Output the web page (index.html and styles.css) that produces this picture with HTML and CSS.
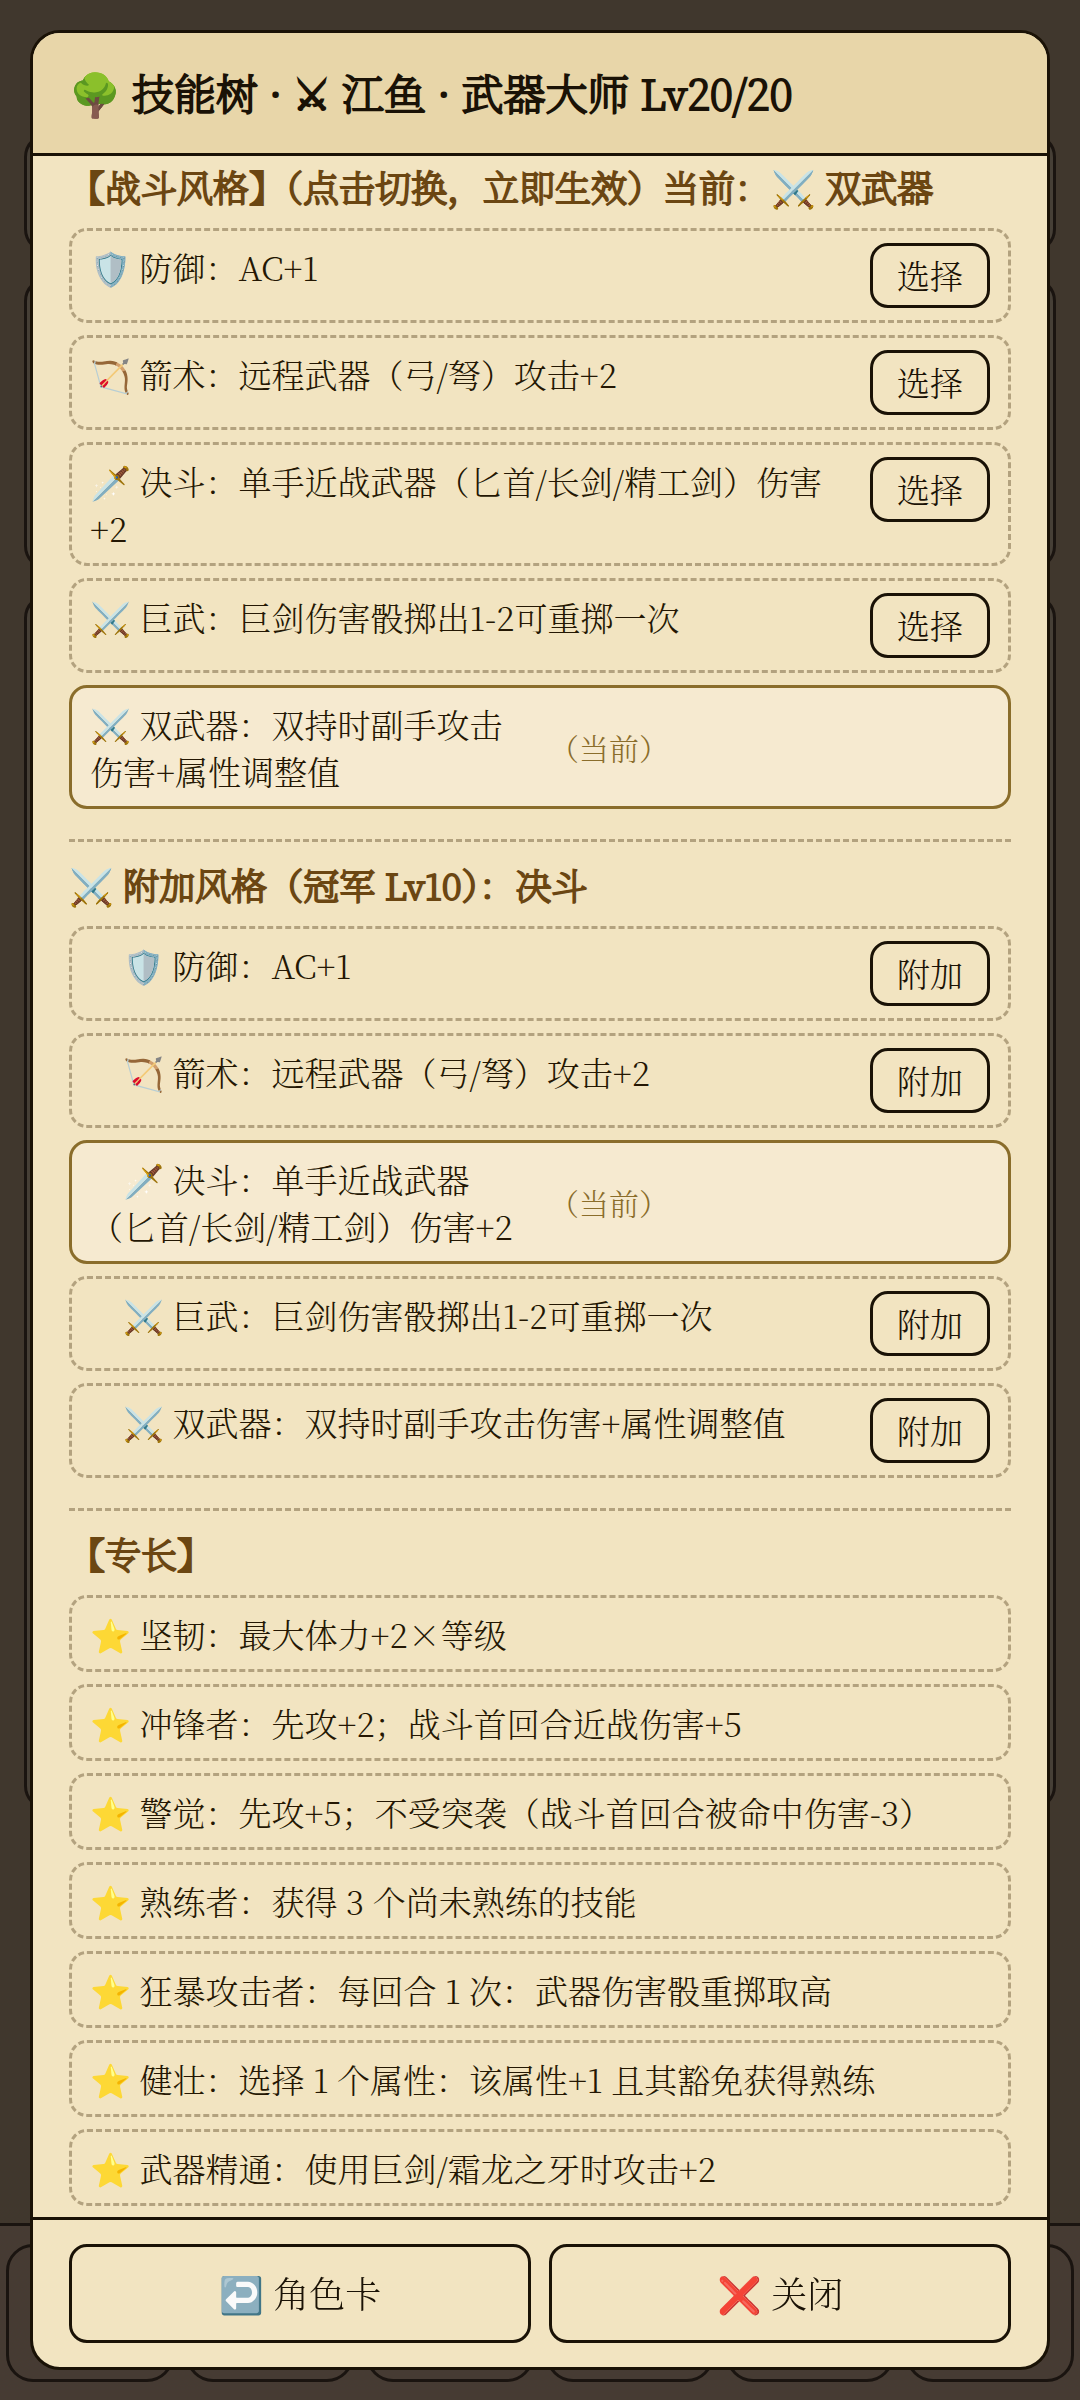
FILE: index.html
```html
<!DOCTYPE html>
<html lang="zh-CN">
<head>
<meta charset="utf-8">
<meta name="viewport" content="width=device-width, initial-scale=1">
<title>技能树</title>
<link rel="stylesheet" href="styles.css">
</head>
<body>
<div class="game" aria-hidden="true">
  <div class="panels">
    <div class="panel panel-status"></div>
    <div class="panel panel-scene"></div>
    <div class="panel panel-log"></div>
  </div>
  <div class="tabs">
    <div class="tab"></div><div class="tab"></div><div class="tab"></div>
    <div class="tab"></div><div class="tab"></div><div class="tab"></div>
  </div>
</div>
<div class="overlay">
  <main class="dialog" role="dialog" aria-labelledby="dialog-title">
    <header class="dialog-head">
      <h1 id="dialog-title">🌳 技能树 · ⚔︎ 江鱼 · 武器大师 Lv20/20</h1>
    </header>
    <div class="dialog-body">
      <section class="group">
        <h2>【战斗风格】（点击切换，立即生效）当前：⚔️ 双武器</h2>
        <ul class="rows">
          <li class="row"><span class="label">🛡️ 防御：AC+1</span><button type="button" class="pick">选择</button></li>
          <li class="row"><span class="label">🏹 箭术：远程武器（弓/弩）攻击+2</span><button type="button" class="pick">选择</button></li>
          <li class="row"><span class="label">🗡️ 决斗：单手近战武器（匕首/长剑/精工剑）伤害+2</span><button type="button" class="pick">选择</button></li>
          <li class="row"><span class="label">⚔️ 巨武：巨剑伤害骰掷出1-2可重掷一次</span><button type="button" class="pick">选择</button></li>
          <li class="row current"><span class="label">⚔️ 双武器：双持时副手攻击伤害+属性调整值</span><span class="mark">（当前）</span></li>
        </ul>
      </section>
      <section class="group">
        <h2>⚔️ 附加风格（冠军 Lv10）：决斗</h2>
        <ul class="rows">
          <li class="row"><span class="label">　🛡️ 防御：AC+1</span><button type="button" class="pick">附加</button></li>
          <li class="row"><span class="label">　🏹 箭术：远程武器（弓/弩）攻击+2</span><button type="button" class="pick">附加</button></li>
          <li class="row current"><span class="label">　🗡️ 决斗：单手近战武器（匕首/长剑/精工剑）伤害+2</span><span class="mark">（当前）</span></li>
          <li class="row"><span class="label">　⚔️ 巨武：巨剑伤害骰掷出1-2可重掷一次</span><button type="button" class="pick">附加</button></li>
          <li class="row"><span class="label">　⚔️ 双武器：双持时副手攻击伤害+属性调整值</span><button type="button" class="pick">附加</button></li>
        </ul>
      </section>
      <section class="group">
        <h2>【专长】</h2>
        <ul class="rows">
          <li class="row"><span class="label">⭐ 坚韧：最大体力+2×等级</span></li>
          <li class="row"><span class="label">⭐ 冲锋者：先攻+2；战斗首回合近战伤害+5</span></li>
          <li class="row"><span class="label">⭐ 警觉：先攻+5；不受突袭（战斗首回合被命中伤害-3）</span></li>
          <li class="row"><span class="label">⭐ 熟练者：获得 3 个尚未熟练的技能</span></li>
          <li class="row"><span class="label">⭐ 狂暴攻击者：每回合 1 次：武器伤害骰重掷取高</span></li>
          <li class="row"><span class="label">⭐ 健壮：选择 1 个属性：该属性+1 且其豁免获得熟练</span></li>
          <li class="row"><span class="label">⭐ 武器精通：使用巨剑/霜龙之牙时攻击+2</span></li>
        </ul>
      </section>
    </div>
    <footer class="dialog-foot">
      <button type="button" class="action">↩️ 角色卡</button>
      <button type="button" class="action">❌ 关闭</button>
    </footer>
  </main>
</div>
</body>
</html>
```
FILE: styles.css
```css
* {
  box-sizing: border-box;
}

html,
body {
  height: 100%;
}

body {
  margin: 0;
  background: #40372d;
  color: #241703;
  font-family: "Noto Serif CJK SC", "Noto Serif SC", "Liberation Serif", "Noto Sans CJK SC", serif;
  font-size: 33px;
  font-weight: 300;
  line-height: 47px;
}

h1,
h2,
ul {
  margin: 0;
  padding: 0;
}

/* Headings thicken the light face, keeping its widths */
h1,
h2 {
  font-weight: 200;
  -webkit-text-stroke: 2px currentColor;
}

button {
  background: transparent;
  border: 3px solid #1a1206;
  border-radius: 18px;
  color: #1a1206;
  font: inherit;
}

/* Game screen dimmed behind the dialog */
.game {
  position: fixed;
  inset: 0;
  display: flex;
  flex-direction: column;
}

.panels {
  flex: 1;
  display: flex;
  flex-direction: column;
  gap: 24px;
  padding: 133px 24px 0;
}

.panel {
  background: #463f36;
  border: 3px solid #1a1410;
  border-radius: 24px;
}

.panel-status {
  height: 120px;
}

.panel-scene {
  height: 293px;
}

.panel-log {
  height: 1216px;
}

.tabs {
  display: grid;
  grid-template-columns: repeat(6, 1fr);
  gap: 12px;
  height: 177px;
  padding: 18px 6px;
  background: #463b33;
  border-top: 3px solid #1a1410;
}

.tab {
  border: 3px solid #1a1410;
  border-radius: 27px;
}

.overlay {
  position: relative;
  display: flex;
  height: 100%;
  padding: 30px;
}

.dialog {
  flex: 1;
  display: flex;
  flex-direction: column;
  overflow: hidden;
  background: #f2e4c1;
  border: 3px solid #1a1206;
  border-radius: 30px;
}

.dialog-head {
  padding: 29px 36px 31px;
  background: #e8d6a9;
  border-bottom: 3px solid #1a1206;
}

h1 {
  color: #1a1206;
  font-size: 42px;
  line-height: 60px;
}

.dialog-body {
  flex: 1;
  min-height: 0;
  padding: 4px 36px 0;
  overflow: hidden;
}

.group + .group {
  margin-top: 30px;
  padding-top: 16px;
  border-top: 3px dashed #b3a27f;
}

h2 {
  margin-bottom: 14px;
  color: #6b4612;
  font-size: 36px;
  line-height: 54px;
}

.rows {
  display: grid;
  gap: 12px;
  list-style: none;
}

.row {
  display: flex;
  align-items: flex-start;
  gap: 18px;
  padding: 12px 18px;
  border: 3px dashed #b3a27f;
  border-radius: 18px;
}

.label {
  flex: 1;
}

.pick {
  padding: 5px 24px 7px;
}

.current {
  display: grid;
  grid-template-columns: 1fr 1fr;
  align-items: center;
  background: #f6ead0;
  border: 3px solid #8a6d2b;
}

.mark {
  color: #8a6d2b;
  font-size: 30px;
}

.dialog-foot {
  display: grid;
  grid-template-columns: 1fr 1fr;
  gap: 18px;
  padding: 24px 36px;
  border-top: 3px solid #1a1206;
}

.action {
  padding: 22px 18px 24px;
  font-size: 36px;
}
```
